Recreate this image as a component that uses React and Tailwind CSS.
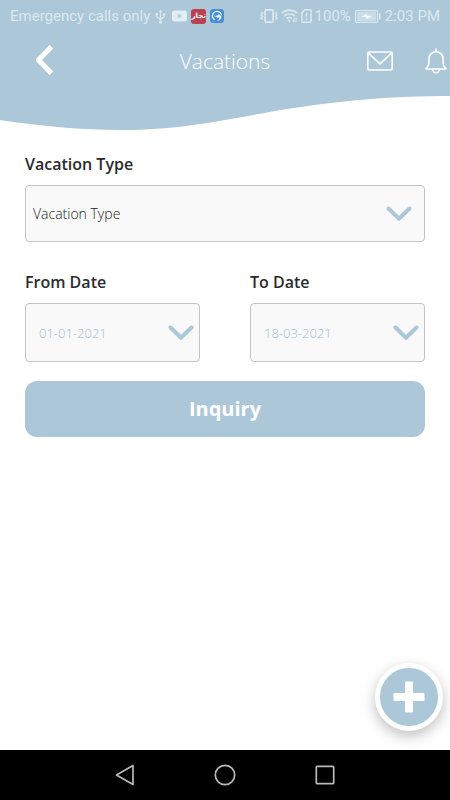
import React from "react";

function Chevron({ className }) {
  return (
    <svg
      className={"pointer-events-none absolute top-1/2 h-4 w-[26px] -translate-y-1/2 " + className}
      viewBox="0 0 26 16"
      fill="none"
      stroke="#abc7d8"
      strokeWidth="4"
      strokeLinecap="round"
      strokeLinejoin="round"
      aria-hidden="true"
    >
      <path d="M2.5 2.5 13 12.8 23.5 2.5" />
    </svg>
  );
}

function StatusBar() {
  return (
    <div className="flex h-8 items-center justify-between px-[10px] font-['Roboto',sans-serif] text-[15px] text-[#dce9f1]">
      <div className="flex items-center gap-[5px]">
        <span className="whitespace-nowrap">Emergency calls only</span>
        <svg className="h-[15px] w-[11px]" viewBox="0 0 11 15" fill="none" stroke="currentColor" strokeWidth="1.2" aria-hidden="true">
          <path d="M5.5 2v11M1.8 5.5v2.3l3.7 2.4 3.7-2.4V5.5" />
          <path d="M3.7 3.2 5.5.4l1.8 2.8Z" fill="currentColor" stroke="none" />
          <circle cx="1.8" cy="5.4" r="1.3" fill="currentColor" stroke="none" />
          <path d="M8 4.3h2.4v2.4H8Z" fill="currentColor" stroke="none" />
          <circle cx="5.5" cy="13" r="1.7" fill="currentColor" stroke="none" />
        </svg>
        <div className="flex items-center gap-1 pl-px">
          <svg className="h-3 w-[15px]" viewBox="0 0 15 12" aria-hidden="true">
            <rect y=".5" width="15" height="11" rx="2.5" fill="#e3eef4" />
            <path d="M5.8 3.4v5.2L10 6Z" fill="#abc7d8" />
          </svg>
          <span className="flex h-[15px] w-[15px] items-center justify-center rounded-[3px] bg-[#b94252] font-['DejaVu_Sans',sans-serif] text-[7px] leading-none font-bold text-white">
            تجار
          </span>
          <svg className="h-[14px] w-[14px]" viewBox="0 0 14 14" fill="none" aria-hidden="true">
            <rect width="14" height="14" rx="3.5" fill="#438fdb" />
            <path d="M4.2 10.6A4.6 4.6 0 1 1 11.4 5.6" stroke="#e8f3fc" strokeWidth="1.3" strokeLinecap="round" />
            <path d="M4.3 6.8C6.5 7 8.3 6.3 9 4.8c.5 1.3 1.8 1.5 2.4 2.6.3 2.6-1.8 4.6-4.6 4.2 1.7-.6 2.6-1.7 2.4-3.2-1.5.5-3.5 0-4.9-1.6Z" fill="#e8f3fc" />
          </svg>
        </div>
      </div>

      <div className="flex items-center gap-1">
        <div className="flex items-center gap-[3px]">
          <svg className="h-[14px] w-[18px]" viewBox="0 0 18 14" fill="none" stroke="currentColor" strokeWidth="1.6" aria-hidden="true">
            <rect x="5" y=".9" width="8" height="12.2" rx="1.2" />
            <path d="m1 3 1.6 1.3L1 6l1.6 1.5L1 9l1.6 1.7M17 3l-1.6 1.3L17 6l-1.6 1.5L17 9l-1.6 1.7" strokeWidth="1.4" />
          </svg>
          <svg className="h-[14px] w-[17px]" viewBox="0 0 17 14" fill="none" stroke="currentColor" strokeWidth="1.6" aria-hidden="true">
            <path d="M.8 4.3a11 11 0 0 1 15.4 0M3.2 7.1a7.6 7.6 0 0 1 10.6 0M5.6 9.7a4.2 4.2 0 0 1 5.2-.4" />
            <path d="m8.5 13.4-2-2.2c1-.8 2-.8 3 0Z" fill="currentColor" stroke="none" />
            <path d="M13 8.8v4.4m-1.4-1.6 1.4 1.6M15 13.2V8.8m1.2 1.6L15 8.8" strokeWidth="1" />
          </svg>
          <svg className="h-[14px] w-[11px]" viewBox="0 0 11 14" fill="none" stroke="currentColor" strokeWidth="1.5" aria-hidden="true">
            <path d="M3.8.8h5c.8 0 1.3.5 1.3 1.3v9.8c0 .8-.5 1.3-1.3 1.3H2.2c-.8 0-1.3-.5-1.3-1.3V3.6Z" />
            <path d="M5.5 3.8v4M5.5 9.3v1.5" strokeWidth="1.6" />
          </svg>
          <span>100%</span>
        </div>
        <svg className="h-[13px] w-[26px]" viewBox="0 0 26 13" fill="none" aria-hidden="true">
          <rect x=".6" y=".6" width="22" height="11.8" rx="1" stroke="currentColor" strokeWidth="1.1" />
          <rect x="2" y="2" width="19.2" height="9" fill="#cbdde7" />
          <path d="M6 6.7 12 4l.5 1.8 5 .2-6 3-.5-2Z" fill="#f5fafc" />
          <path d="M24.8 3.5v6" stroke="currentColor" strokeWidth="1.6" />
        </svg>
        <span className="whitespace-nowrap">2:03 PM</span>
      </div>
    </div>
  );
}

function Header() {
  return (
    <header>
      <div className="bg-[#abc7d8]">
        <StatusBar />
        <div className="grid h-16 grid-cols-[1fr_auto_1fr] items-start">
          <button type="button" aria-label="Back" className="ml-8 flex h-14 w-6 items-center justify-center">
            <svg className="h-[30px] w-[18px]" viewBox="0 0 18 30" fill="none" stroke="#fff" strokeWidth="5" strokeLinejoin="round" aria-hidden="true">
              <path d="M16.5 1.7 3.5 15l13 13.3" />
            </svg>
          </button>
          <h1 className="flex h-[60px] items-center text-[21px] font-light text-white">
            Vacations
          </h1>
          <div className="flex h-[58px] items-center justify-end gap-8 pr-[3px]">
            <button type="button" aria-label="Messages">
              <svg className="h-5 w-[26px]" viewBox="0 0 26 20" fill="none" stroke="#fff" strokeWidth="1.6" strokeLinejoin="round" aria-hidden="true">
                <rect x=".8" y="1" width="24.4" height="18" rx="1.5" />
                <path d="m1.3 1.8 11.7 11 11.7-11" />
              </svg>
            </button>
            <button type="button" aria-label="Notifications">
              <svg className="h-[26px] w-[22px]" viewBox="0 0 22 26" fill="none" stroke="#fff" strokeWidth="1.6" strokeLinejoin="round" strokeLinecap="round" aria-hidden="true">
                <path d="M11 1v2.7M11 3.7c-4 0-7 2.8-7 7v4.2c0 2.6-1.4 4.2-3 6.1h20c-1.6-1.9-3-3.5-3-6.1v-4.2c0-4.2-3-7-7-7Z" />
                <path d="M7.6 21.3a3.4 3.4 0 0 0 6.8 0" />
              </svg>
            </button>
          </div>
        </div>
      </div>
      <svg className="block h-[34px] w-full" viewBox="0 0 450 34" preserveAspectRatio="none" aria-hidden="true">
        <path d="M0 0H450C395 0 340 4 275 15C215 26 175 34 124 34C80 34 40 30 0 24Z" fill="#abc7d8" />
      </svg>
    </header>
  );
}

function DateField({ id, label, value }) {
  return (
    <div>
      <label htmlFor={id} className="block text-base leading-6 font-semibold text-[#2b2b2d]">
        {label}
      </label>
      <div className="relative mt-[9px]">
        <input
          id={id}
          type="text"
          defaultValue={value}
          className="block h-[59px] w-full rounded-[4px] border border-[#c4c4c4] bg-[#f9f9f9] pr-9 pl-[13px] text-[13px] font-light text-[#9dbccf] outline-none"
        />
        <Chevron className="right-[6px]" />
      </div>
    </div>
  );
}

export default function App() {
  return (
    <div className="relative flex min-h-screen flex-col bg-white font-['Open_Sans','Noto_Sans',sans-serif]">
      <Header />

      <main className="flex-1 px-[25px] pt-[22px]">
        <form onSubmit={(e) => e.preventDefault()}>
          <label htmlFor="vacation-type" className="block text-base leading-6 font-semibold text-[#2b2b2d]">
            Vacation Type
          </label>
          <div className="relative mt-[9px]">
            <select
              id="vacation-type"
              className="block h-[57px] w-full appearance-none rounded-[4px] border border-[#c4c4c4] bg-[#f9f9f9] pr-12 pl-[7px] text-sm font-light text-[#1c1c1c] outline-none"
            >
              <option>Vacation Type</option>
            </select>
            <Chevron className="right-[13px]" />
          </div>

          <div className="mt-7 grid grid-cols-2 gap-[50px]">
            <DateField id="from-date" label="From Date" value="01-01-2021" />
            <DateField id="to-date" label="To Date" value="18-03-2021" />
          </div>

          <button
            type="submit"
            className="mt-[19px] block h-14 w-full rounded-xl bg-[#abc7d8] text-xl font-bold text-white"
          >
            Inquiry
          </button>
        </form>
      </main>

      <button
        type="button"
        aria-label="Add vacation"
        className="absolute right-[7px] bottom-[69px] flex h-[68px] w-[68px] items-center justify-center rounded-full border-[5px] border-white bg-[#abc7d8] shadow-[0_5px_14px_rgba(0,0,0,0.25)]"
      >
        <svg className="h-8 w-8" viewBox="0 0 32 32" fill="#fff" aria-hidden="true">
          <rect x="12" y=".5" width="8" height="31" rx="1" />
          <rect x=".5" y="12" width="31" height="8" rx="1" />
        </svg>
      </button>

      <nav className="flex h-[50px] items-center justify-center gap-[78px] bg-black">
        <button type="button" aria-label="System back">
          <svg className="h-[22px] w-[22px]" viewBox="0 0 22 22" fill="none" stroke="#b9b9b9" strokeWidth="1.7" strokeLinejoin="round" aria-hidden="true">
            <path d="M19 1.5V20.5L2.5 11Z" />
          </svg>
        </button>
        <button type="button" aria-label="Home">
          <svg className="h-[22px] w-[22px]" viewBox="0 0 22 22" fill="none" stroke="#b9b9b9" strokeWidth="1.7" aria-hidden="true">
            <circle cx="11" cy="11" r="9.7" />
          </svg>
        </button>
        <button type="button" aria-label="Recent apps">
          <svg className="h-[22px] w-[22px]" viewBox="0 0 22 22" fill="none" stroke="#b9b9b9" strokeWidth="1.7" aria-hidden="true">
            <rect x="2.3" y="2.3" width="17.4" height="17.4" rx="1" />
          </svg>
        </button>
      </nav>
    </div>
  );
}
